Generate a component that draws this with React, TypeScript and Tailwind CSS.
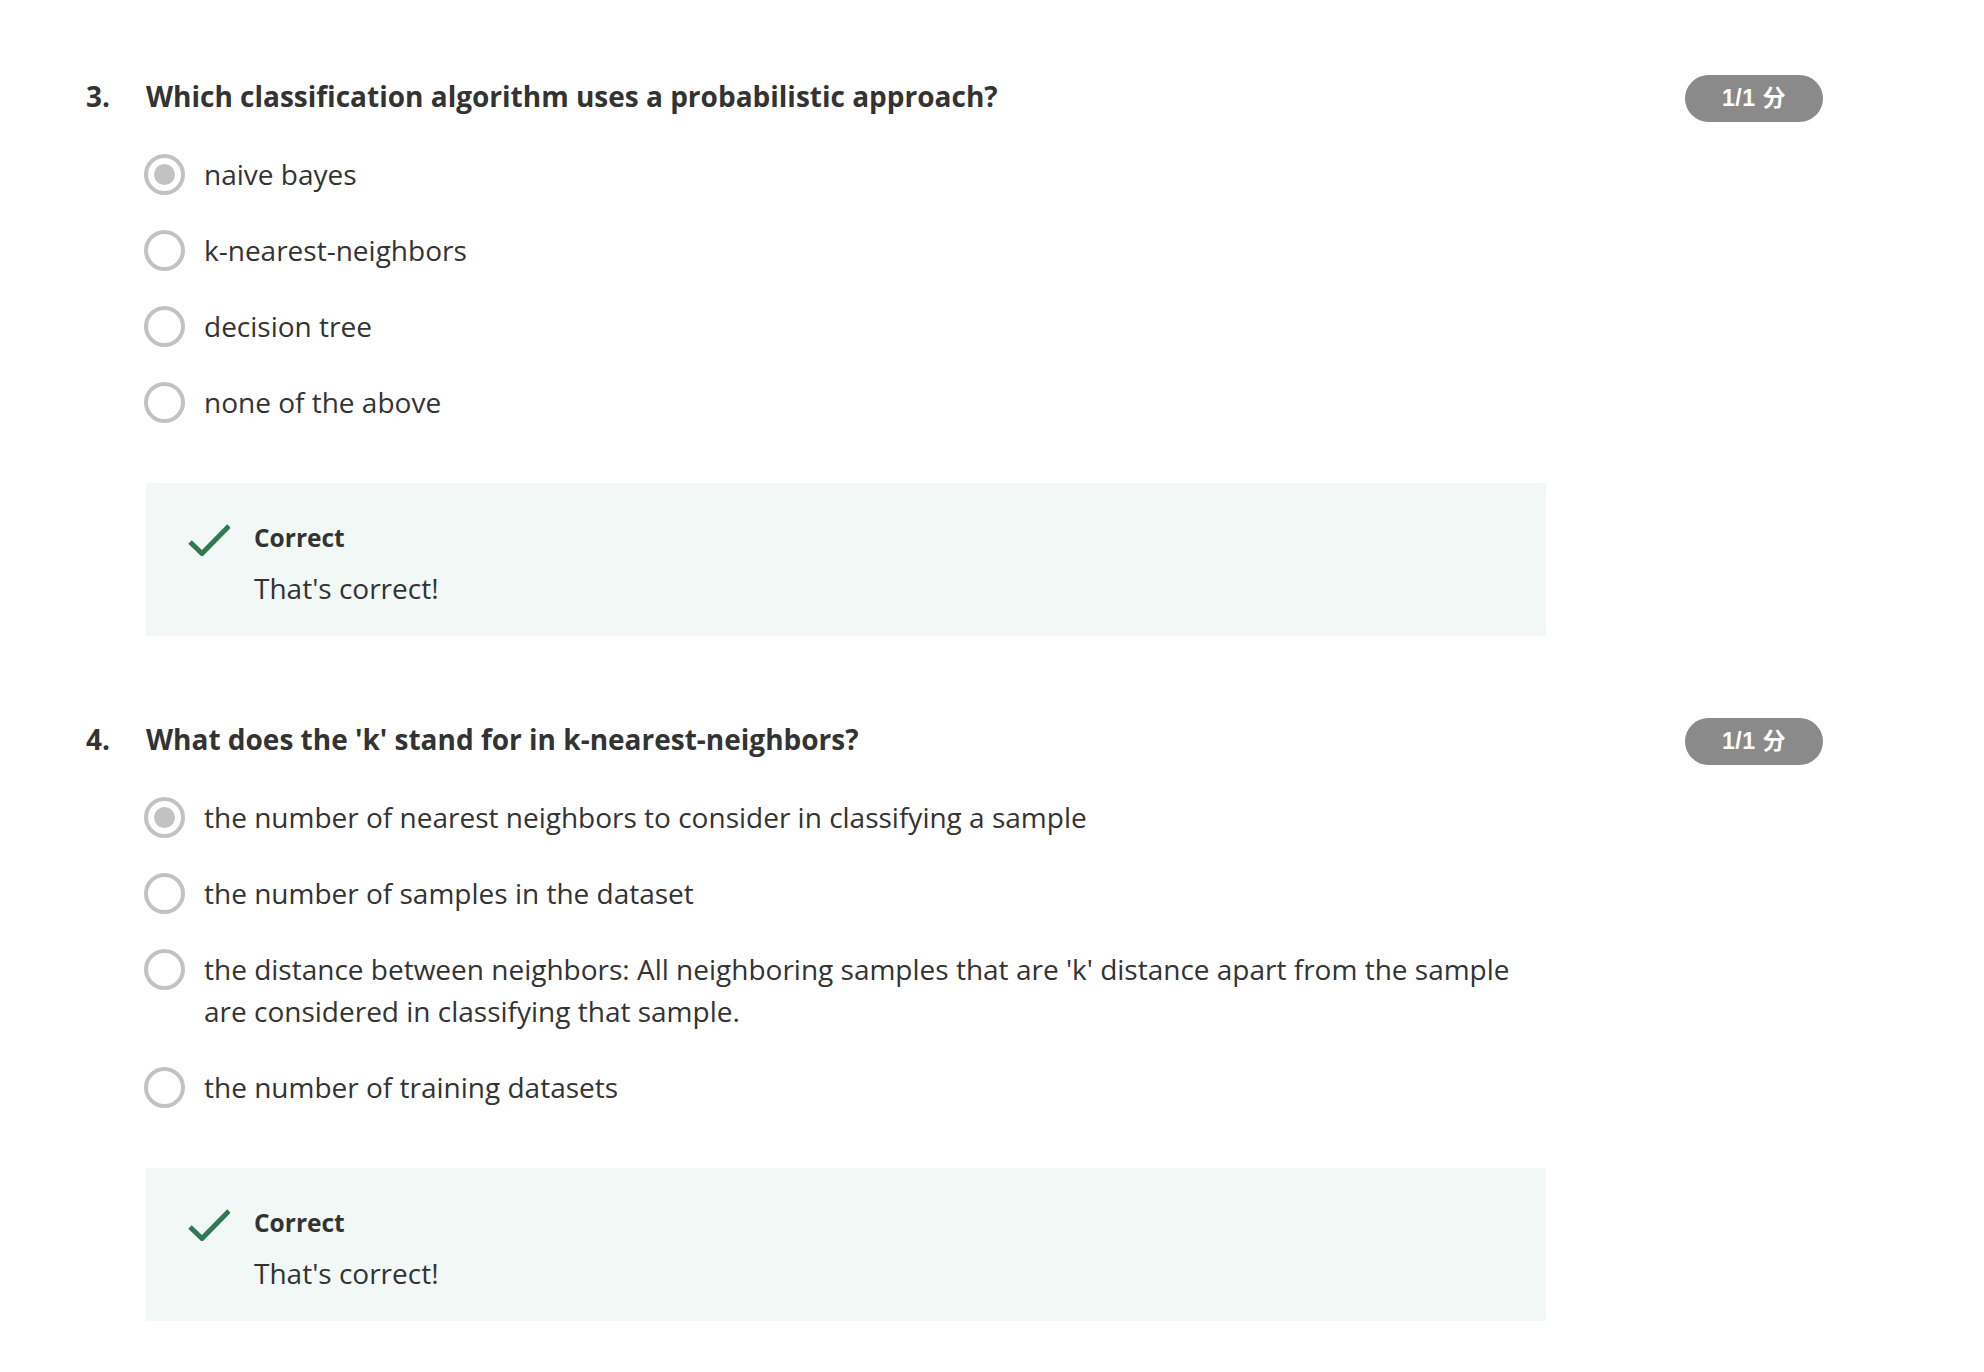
import { useState } from "react";

interface Question {
  num: number;
  title: string;
  options: string[];
  selected: number;
  score: string;
  feedback: string;
}

const questions: Question[] = [
  {
    num: 3,
    title: "Which classification algorithm uses a probabilistic approach?",
    options: ["naive bayes", "k-nearest-neighbors", "decision tree", "none of the above"],
    selected: 0,
    score: "1/1 分",
    feedback: "That's correct!",
  },
  {
    num: 4,
    title: "What does the 'k' stand for in k-nearest-neighbors?",
    options: [
      "the number of nearest neighbors to consider in classifying a sample",
      "the number of samples in the dataset",
      "the distance between neighbors: All neighboring samples that are 'k' distance apart from the sample are considered in classifying that sample.",
      "the number of training datasets",
    ],
    selected: 0,
    score: "1/1 分",
    feedback: "That's correct!",
  },
];

function Radio({ checked }: { checked: boolean }) {
  return (
    <span className="-ml-[2px] mt-[1px] flex h-[41px] w-[41px] shrink-0 items-center justify-center rounded-full border-[4px] border-[#c2c2c2] bg-white">
      {checked && <span className="h-[21px] w-[21px] rounded-full bg-[#c2c2c2]" />}
    </span>
  );
}

function CheckIcon() {
  return (
    <svg width="42" height="32" viewBox="0 0 42 32" className="mt-[4px] shrink-0">
      <path d="M2 18 L14 29.5 L41 2" fill="none" stroke="#2f7a52" strokeWidth="5" />
    </svg>
  );
}

function QuestionBlock({ q }: { q: Question }) {
  const [selected] = useState(q.selected);
  return (
    <div className="flex justify-between">
      <div className="flex">
        <div className="w-[60px] text-[28px] font-bold leading-[42px]">{q.num}.</div>
        <div className="w-[1400px]">
          <h2 className="text-[28px] font-bold leading-[42px]">{q.title}</h2>

          <div className="mt-[36px] flex flex-col gap-[34px]">
            {q.options.map((opt, i) => (
              <label key={i} className="flex items-start gap-[19px] pr-[36px]">
                <Radio checked={i === selected} />
                <span className="text-[28px] leading-[42px]">{opt}</span>
              </label>
            ))}
          </div>

          {/* feedback */}
          <div className="mt-[60px] flex gap-[24px] bg-[#f2f8f5] pb-[27px] pl-[42px] pt-[37px]">
            <CheckIcon />
            <div>
              <div className="text-[24.5px] font-bold leading-[36px]">Correct</div>
              <p className="mt-[11px] text-[28px] leading-[42px]">{q.feedback}</p>
            </div>
          </div>
        </div>
      </div>

      <div className="flex h-[47px] w-[138px] items-center justify-center rounded-full bg-[#8a8a8a] font-['Liberation_Sans','Noto_Sans_CJK_SC',sans-serif] text-[23px] font-bold tracking-[0.5px] text-white">
        {q.score}
      </div>
    </div>
  );
}

export default function App() {
  return (
    <div className="min-h-screen bg-white pl-[86px] pr-[161px] pt-[75px] font-['Open_Sans',sans-serif] text-[#333]">
      <div className="flex flex-col gap-[82px]">
        {questions.map((q) => (
          <QuestionBlock key={q.num} q={q} />
        ))}
      </div>
    </div>
  );
}
